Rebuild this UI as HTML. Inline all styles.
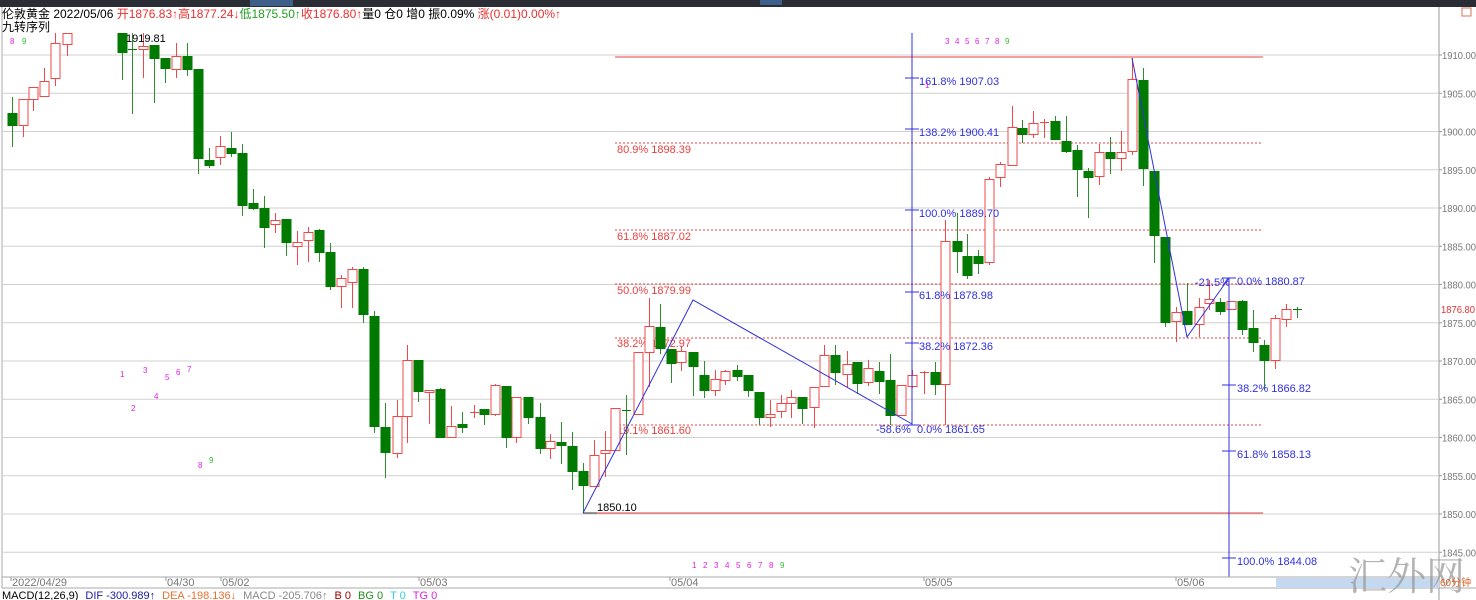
<!DOCTYPE html>
<html><head><meta charset="utf-8">
<style>
html,body{margin:0;padding:0;background:#fff;overflow:hidden}
body{width:1476px;height:600px;position:relative;font-family:"Liberation Sans","Noto Sans CJK SC",sans-serif}
svg{position:absolute;left:0;top:0}
.t{font-family:"Liberation Sans","Noto Sans CJK SC",sans-serif}
</style></head><body>
<svg id="s" width="1476" height="600" xmlns="http://www.w3.org/2000/svg">
<rect x="0" y="0" width="1476" height="7" fill="#2a2d33"/>
<rect x="250" y="0" width="43" height="6" fill="#3d5f8a"/>
<rect x="760" y="0" width="22" height="5" fill="#3d5f8a"/>
<line x1="2" y1="7" x2="2" y2="588" stroke="#aaa"/>
<line x1="1439" y1="7" x2="1439" y2="600" stroke="#999"/>
<rect x="1462" y="8" width="9" height="8" fill="none" stroke="#e07050"/>
<g id="grid" stroke="#d0d0d0" stroke-width="1"></g>
<g id="axis" class="t" font-size="10.5" fill="#777"></g>
<g id="fib"></g>
<g id="candles"></g>
<g id="over"></g>
<line x1="2" y1="577" x2="1439" y2="577" stroke="#aaa"/>
<line x1="2" y1="588" x2="1476" y2="588" stroke="#aaa"/>
<rect x="1276" y="578" width="163" height="10" fill="#c4d8f0"/>
<g class="t" font-size="11" fill="#777">
<text x="12" y="586">2022/04/29</text><line x1="11" y1="577" x2="11" y2="581" stroke="#999"/>
<text x="167" y="586">04/30</text><line x1="166" y1="577" x2="166" y2="581" stroke="#999"/>
<text x="222" y="586">05/02</text><line x1="221" y1="577" x2="221" y2="581" stroke="#999"/>
<text x="420" y="586">05/03</text><line x1="419" y1="577" x2="419" y2="581" stroke="#999"/>
<text x="671" y="586">05/04</text><line x1="670" y1="577" x2="670" y2="581" stroke="#999"/>
<text x="925" y="586">05/05</text><line x1="924" y1="577" x2="924" y2="581" stroke="#999"/>
<text x="1177" y="586">05/06</text><line x1="1176" y1="577" x2="1176" y2="581" stroke="#999"/>
</g>
<text x="1348" y="590" font-size="39" fill="#9a9a9a" fill-opacity="0.75" font-family="'Noto Serif CJK SC','Noto Sans CJK SC',serif">汇外网</text>
<text x="1440" y="586" font-size="10" fill="#e06020" class="t">60分钟</text>
<text x="2" y="599" font-size="11" class="t"><tspan fill="#000">MACD(12,26,9)</tspan><tspan fill="#1c1c9c" dx="7">DIF -300.989↑</tspan><tspan fill="#e87030" dx="7">DEA -198.136↓</tspan><tspan fill="#888" dx="7">MACD -205.706↑</tspan><tspan fill="#a00000" dx="7">B 0</tspan><tspan fill="#209020" dx="7">BG 0</tspan><tspan fill="#30d0e0" dx="7">T 0</tspan><tspan fill="#e020e0" dx="7">TG 0</tspan></text>
<text x="2" y="18" font-size="12" class="t"><tspan fill="#000">伦敦黄金 2022/05/06 </tspan><tspan fill="#e83030">开1876.83↑高1877.24↓</tspan><tspan fill="#20a020">低1875.50↑</tspan><tspan fill="#e83030">收1876.80↑</tspan><tspan fill="#000">量0  仓0 增0 振0.09% </tspan><tspan fill="#e83030">涨(0.01)0.00%↑</tspan></text>
<text x="2" y="31" font-size="12" fill="#000" class="t">九转序列</text>
</svg>
<script>
var NS="http://www.w3.org/2000/svg";
function el(p,t,a,txt){var e=document.createElementNS(NS,t);for(var k in a)e.setAttribute(k,a[k]);if(txt!==undefined)e.textContent=txt;document.getElementById(p).appendChild(e);return e;}
for(var i=0;i<14;i++){var y=55+i*38.25;var p=1910-5*i;
el("grid","line",{x1:3,y1:y,x2:1439,y2:y});
el("axis","line",{x1:1439,y1:y,x2:1442,y2:y,stroke:"#999"});
el("axis","text",{x:1442,y:y+4,textLength:34,lengthAdjust:"spacingAndGlyphs"},p.toFixed(2));}
el("axis","text",{x:1441,y:313,fill:"#e83030",textLength:34,lengthAdjust:"spacingAndGlyphs"},"1876.80");
var C=[
[12,113,125,97,147,0],[23,99,125,99,137,1],[33,87,99,87,111,1],[44,81,96,68,96,1],[55,43,78,33,86,1],[67,33,44,33,56,1],
[122,33,52,33,80,0],[132,49,49,33,114,0],[143,46,49,33,78,1],[154,45,58,45,103,0],[165,58,68,58,83,0],[176,56,69,43,78,1],[187,56,69,43,76,0],
[198,69,158,69,174,0],[209,160,165,148,168,0],[220,146,157,136,165,1],[231,148,153,132,157,0],[242,153,205,144,216,0],[253,203,208,189,210,0],
[264,208,227,196,248,0],[275,220,224,213,233,1],[286,219,242,219,256,0],[297,242,246,231,265,1],[308,232,240,227,262,1],[319,230,252,229,262,0],
[330,252,286,243,290,0],[341,278,286,275,308,1],[352,269,282,267,308,1],[363,269,314,267,323,0],[374,316,426,311,433,0],
[385,427,452,403,478,0],[397,416,453,400,458,1],[407,360,416,345,443,1],[418,360,391,360,402,0],[429,390,392,390,424,1],[440,389,437,388,437,0],
[451,426,437,406,437,1],[462,424,427,412,433,0],[474,412,412,405,418,1],[484,409,414,409,425,0],[495,385,414,384,416,1],[506,386,437,386,448,0],
[516,397,437,397,443,1],[528,397,417,397,424,0],[540,417,448,403,454,0],[550,441,448,434,459,1],[561,442,445,422,464,0],[572,446,471,432,490,0],
[583,471,485,463,513,0],[594,455,486,440,487,1],[605,450,453,431,477,1],[615,408,450,408,451,1],[626,410,410,395,455,0],[638,352,414,352,414,1],
[649,326,352,298,387,1],[660,327,348,304,354,0],[671,349,363,349,383,0],[681,351,362,346,371,1],[693,352,366,352,396,0],[704,375,390,361,398,0],
[715,379,390,370,396,1],[725,371,380,370,385,1],[737,370,376,365,381,0],[748,375,390,375,397,0],[759,392,417,392,425,0],[770,414,417,400,427,1],
[781,403,411,395,418,1],[791,397,403,390,418,1],[802,397,408,397,424,0],[814,387,407,387,428,1],[824,355,386,345,387,1],[835,355,372,345,385,0],
[847,364,374,351,388,1],[857,362,383,362,394,0],[868,368,382,360,386,1],[879,371,381,362,394,0],[890,380,415,354,425,0],[901,385,415,385,416,1],
[912,375,386,370,388,1],[924,372,372,371,394,1],[935,372,384,362,395,0],
[945,241,384,220,425,1],[957,241,251,213,273,0],[967,256,275,234,279,0],[978,256,263,250,274,0],[989,179,262,177,265,1],[1000,164,177,162,187,1],
[1012,127,165,106,165,1],[1022,128,134,120,143,0],[1033,123,134,111,138,1],[1044,122,122,119,138,1],[1055,121,139,116,140,0],[1066,141,151,116,153,0],
[1077,150,169,145,197,0],[1088,171,177,168,218,0],[1099,152,176,144,185,1],[1110,152,158,137,174,0],[1121,152,158,131,171,1],[1132,79,151,58,155,1],
[1143,80,168,68,186,0],[1154,171,235,171,263,0],[1165,237,322,237,327,0],[1176,312,321,307,342,1],[1187,311,324,283,324,0],[1199,307,324,298,337,1],
[1209,299,303,280,310,1],[1220,302,311,298,315,0],[1231,301,309,301,309,1],[1242,301,329,300,335,0],[1253,328,342,310,352,0],[1264,345,360,340,390,0],
[1275,318,360,315,369,1],[1286,309,319,304,327,1],[1297,309,309,307,318,0]];
C.forEach(function(c){var x=c[0],r=c[5],col=r?"#f04848":"#007a00";
el("candles","line",{x1:x+.5,y1:c[3],x2:x+.5,y2:c[4],stroke:r?"#f04848":"#2e8b2e"});
var h=Math.max(c[2]-c[1],1);
if(h<=1){el("candles","line",{x1:x-4,y1:c[1]+.5,x2:x+5,y2:c[1]+.5,stroke:col});}
else el("candles","rect",{x:x-4,y:c[1]+.5,width:9,height:h,fill:r?"#fff":"#007a00",stroke:col});});
function fl(y,lab,ly){el("fib","line",{x1:615,y1:y,x2:1263,y2:y,stroke:"#e84040","stroke-dasharray":"2,2"});
el("fib","text",{x:617,y:ly,"font-size":11,fill:"#e84040",class:"t"},lab);}
fl(143,"80.9% 1898.39",153);fl(230,"61.8% 1887.02",240);fl(284,"50.0% 1879.99",294);fl(338,"38.2% 1872.97",347);fl(425,"19.1% 1861.60",434);
el("over","line",{x1:615,y1:57,x2:1263,y2:57,stroke:"#e84040"});
el("over","line",{x1:597,y1:513,x2:1263,y2:513,stroke:"#e84040"});
el("over","line",{x1:583,y1:513,x2:597,y2:513,stroke:"#333"});
el("over","text",{x:597,y:511,"font-size":11,fill:"#000",class:"t"},"1850.10");
el("over","text",{x:126,y:42,"font-size":11,fill:"#000",class:"t"},"1919.81");
var B="#3030e0";
el("over","polyline",{points:"583,513 693,300 912,424",fill:"none",stroke:B});
el("over","polyline",{points:"1132,58 1187,337 1229,278",fill:"none",stroke:B});
el("over","line",{x1:912,y1:33,x2:912,y2:425,stroke:B});
el("over","line",{x1:1229,y1:278,x2:1229,y2:577,stroke:B});
[[78,"161.8% 1907.03"],[129,"138.2% 1900.41"],[210,"100.0% 1889.70"],[292,"61.8% 1878.98"],[343,"38.2% 1872.36"]].forEach(function(a){
el("over","line",{x1:905,y1:a[0],x2:919,y2:a[0],stroke:B});el("over","text",{x:919,y:a[0]+7,"font-size":11,fill:B,class:"t"},a[1]);});
el("over","line",{x1:905,y1:425,x2:919,y2:425,stroke:B});
el("over","text",{x:917,y:433,"font-size":11,fill:B,class:"t"},"0.0% 1861.65");
el("over","text",{x:876,y:433,"font-size":11,fill:B,class:"t"},"-58.6%");
[[278,"0.0% 1880.87"],[385,"38.2% 1866.82"],[451,"61.8% 1858.13"],[558,"100.0% 1844.08"]].forEach(function(a){
el("over","line",{x1:1222,y1:a[0],x2:1236,y2:a[0],stroke:B});el("over","text",{x:1237,y:a[0]+7,"font-size":11,fill:B,class:"t"},a[1]);});
el("over","text",{x:1195,y:286,"font-size":11,fill:B,class:"t"},"-21.5%");
function n(x,y,t,c){el("over","text",{x:x,y:y,"font-size":8,fill:c,class:"t"},t);}
var M="#e020e0",G="#30c030";
n(10,44,"8",M);n(22,44,"9",G);
n(120,377,"1",M);n(131,411,"2",M);n(143,373,"3",M);n(154,399,"4",M);n(165,380,"5",M);n(176,375,"6",M);n(187,372,"7",M);n(198,468,"8",M);n(209,463,"9",G);
"3456789".split("").forEach(function(d,i){n(945+i*10,44,d,d=="9"?G:M);});
"123456789".split("").forEach(function(d,i){n(692+i*11,568,d,d=="9"?G:M);});
n(925,88,"1",M);
</script>
</body></html>
